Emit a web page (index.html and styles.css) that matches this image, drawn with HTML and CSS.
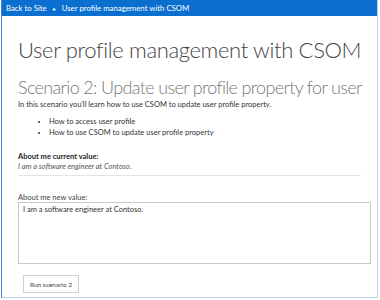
FILE: index.html
```html
<!DOCTYPE html>
<html lang="en">
<head>
    <meta charset="UTF-8">
    <title>User profile management with CSOM</title>
    <link rel="stylesheet" href="styles.css">
</head>
<body>
    <div class="frame">
        <div class="top-bar">
            <a class="top-link" href="#">Back to Site</a>
            <span class="crumb-arrow">&#9656;</span>
            <span class="top-title">User profile management with CSOM</span>
        </div>
        <div class="content">
            <h1>User profile management with CSOM</h1>
            <h2>Scenario 2: Update user profile property for user</h2>
            <p class="intro">In this scenario you'll learn how to use CSOM to update user profile property.</p>
            <ul class="points">
                <li>How to access user profile</li>
                <li>How to use CSOM to update user profile property</li>
            </ul>
            <div class="current">
                <div class="label-bold">About me current value:</div>
                <div class="current-value">I am a software engineer at Contoso.</div>
            </div>
            <label class="label" for="about-me">About me new value:</label>
            <textarea id="about-me" class="about-box">I am a software engineer at Contoso.</textarea>
            <button type="button" class="btn">Run scenario 2</button>
        </div>
    </div>
</body>
</html>
```

FILE: styles.css
```css
body {
    margin: 0;
    font-family: 'Lato', 'Open Sans', sans-serif;
    background-color: #fff;
    color: #333;
}
.frame {
    margin-left: 1px;
    width: 377px;
    height: 298px;
    box-sizing: border-box;
    border-left: 1px solid #4f7fd1;
    border-right: 1px solid #bcd0f0;
    border-bottom: 1px solid #bcd0f0;
    overflow: hidden;
}
.top-bar {
    height: 16px;
    background-color: #0a6fcf;
    display: flex;
    align-items: center;
    padding-left: 4px;
    font-size: 7.8px;
    color: #fff;
    white-space: nowrap;
}
.top-link {
    color: #fff;
    text-decoration: none;
}
.crumb-arrow {
    font-size: 6px;
    margin: 0 6px 0 6px;
}
.content {
    padding: 0 8px 0 16px;
}
.content h1 {
    font-weight: 300;
    font-size: 22px;
    color: #444;
    margin: 20px 0 0 0;
    line-height: 28px;
    letter-spacing: -0.35px;
    white-space: nowrap;
}
.content h2 {
    font-weight: 300;
    font-size: 18px;
    color: #777;
    margin: 11px 0 0 0;
    line-height: 24px;
    letter-spacing: -0.65px;
    white-space: nowrap;
}
.intro {
    font-size: 7.5px;
    margin: 0;
    line-height: 11px;
}
.points {
    font-size: 7.5px;
    margin: 7px 0 0 0;
    padding-left: 31px;
    line-height: 10.5px;
}
.current {
    margin-top: 14px;
    padding-bottom: 3px;
    border-bottom: 1px solid #e3e3e3;
    width: 343px;
    font-size: 7.5px;
    line-height: 10px;
}
.label-bold {
    font-weight: 700;
    color: #222;
}
.current-value {
    font-style: italic;
    color: #555;
}
.label {
    display: block;
    font-size: 7.5px;
    color: #444;
    margin-top: 18px;
    line-height: 8px;
}
.about-box {
    display: block;
    box-sizing: border-box;
    width: 353px;
    height: 62px;
    margin-top: 0;
    border: 1px solid #c8c8c8;
    font-family: inherit;
    font-size: 7.5px;
    color: #333;
    padding: 2px 4px;
    resize: none;
}
.btn {
    display: block;
    margin: 11px 0 0 5px;
    width: 56px;
    height: 18px;
    padding: 0;
    font-family: inherit;
    font-size: 6.5px;
    color: #444;
    background-color: #fff;
    border: 1px solid #d0d0d0;
}
```
